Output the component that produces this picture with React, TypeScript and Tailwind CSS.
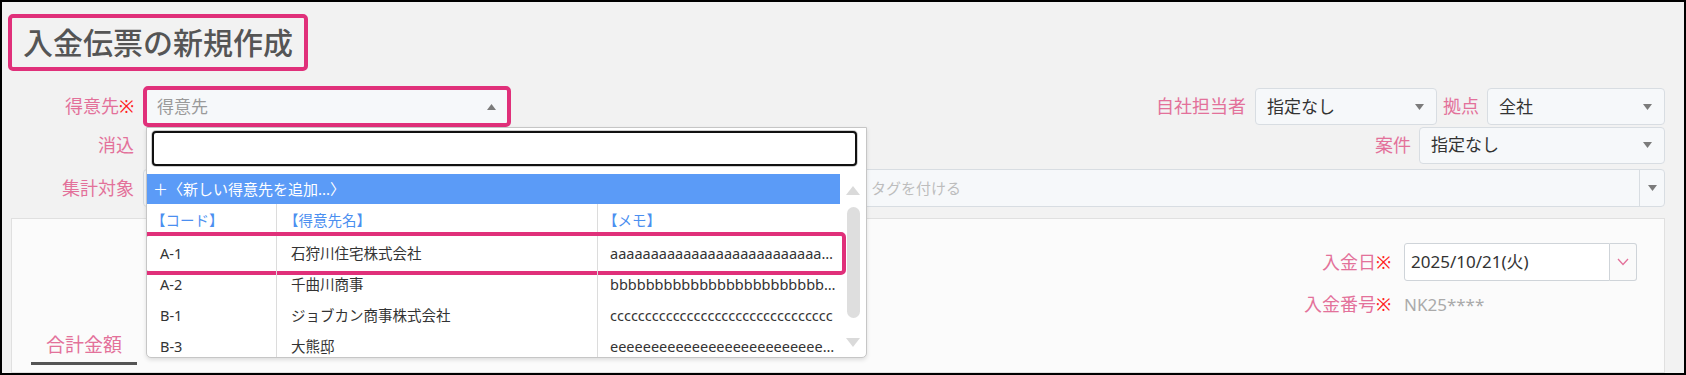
import React from "react";

function Caret({ up = false }: { up?: boolean }) {
  return (
    <svg width="9" height="6" viewBox="0 0 9 6" className="shrink-0">
      <polygon points={up ? "0,6 9,6 4.5,0" : "0,0 9,0 4.5,6"} fill="#7b7b7b" />
    </svg>
  );
}

function Label({ children, req = false, className = "" }: { children: React.ReactNode; req?: boolean; className?: string }) {
  return (
    <span className={"whitespace-nowrap text-[18px] text-[#e3719a] " + className}>
      {children}
      {req && <span className="text-[#ff2020]">※</span>}
    </span>
  );
}

function Select({ value, className = "" }: { value: string; className?: string }) {
  return (
    <div
      className={
        "flex h-[37px] items-center justify-between rounded-[4px] border border-[#d8dde2] bg-[#f6f8fa] pl-[11px] pr-[12px] text-[17px] text-[#333] " +
        className
      }
    >
      <span>{value}</span>
      <Caret />
    </div>
  );
}

const rows = [
  { code: "A-1", name: "石狩川住宅株式会社", memo: "aaaaaaaaaaaaaaaaaaaaaaaaaaaaaaaaaaaaaaaaa", sel: true },
  { code: "A-2", name: "千曲川商事", memo: "bbbbbbbbbbbbbbbbbbbbbbbbbbbbbbbbbbbbbbbbb", sel: false },
  { code: "B-1", name: "ジョブカン商事株式会社", memo: "cccccccccccccccccccccccccccccccc", sel: false },
  { code: "B-3", name: "大熊邸", memo: "eeeeeeeeeeeeeeeeeeeeeeeeeeeeeeeeeeeeeeeeeeee", sel: false },
];

function Dropdown() {
  return (
    <div className="absolute left-[3px] top-[41px] z-20 flex h-[231px] w-[721px] flex-col overflow-hidden rounded-b-[5px] border border-[#c6c6c6] bg-white shadow-[0_2px_4px_rgba(0,0,0,0.12)]">
      <div className="pl-[5px] pr-[9px] pt-[3px]">
        <div className="h-[35px] rounded-[4px] border-2 border-[#111] bg-white shadow-[0_0_0_1px_#cfcfcf]" />
      </div>
      <div className="mt-[8px] flex min-h-0 flex-1">
        <div className="flex w-[693px] flex-col">
          <div className="flex h-[30px] shrink-0 items-center bg-[#5b9bf7] pl-[6px] text-[15px] text-white">
            ＋〈新しい得意先を追加...〉
          </div>
          <div className="grid h-[34px] shrink-0 grid-cols-[130px_321px_242px] text-[14.5px] text-[#4b8ff0]">
            <div className="flex items-center border-r border-[#dcdcdc] pl-[4px]">【コード】</div>
            <div className="flex items-center border-r border-[#dcdcdc] pl-[7px]">【得意先名】</div>
            <div className="flex items-center pl-[5px]">【メモ】</div>
          </div>
          {rows.map((r) => (
            <div key={r.code} className="relative grid h-[31px] shrink-0 grid-cols-[130px_321px_242px] text-[14.5px] text-[#333]">
              <div className="flex items-center border-r border-[#dcdcdc] pl-[13px]">{r.code}</div>
              <div className="flex items-center border-r border-[#dcdcdc] pl-[14px]">{r.name}</div>
              <div className="min-w-0 self-center overflow-hidden text-ellipsis whitespace-nowrap pl-[12px] pr-[1px]">{r.memo}</div>
              {r.sel && (
                <div className="pointer-events-none absolute -bottom-[6px] -left-[4px] -right-[6px] -top-[6px] rounded-[5px] border-4 border-[#e0307a]" />
              )}
            </div>
          ))}
        </div>
        <div className="flex flex-1 flex-col items-center pt-[12px]">
          <svg width="14" height="9" viewBox="0 0 14 9">
            <polygon points="0,9 14,9 7,0" fill="#dadada" />
          </svg>
          <div className="mt-[12px] h-[111px] w-[13px] rounded-full bg-[#dedede]" />
          <svg width="14" height="9" viewBox="0 0 14 9" className="mt-[20px]">
            <polygon points="0,0 14,0 7,9" fill="#dadada" />
          </svg>
        </div>
      </div>
    </div>
  );
}

export default function App() {
  return (
    <div className="flex h-[375px] w-[1686px] flex-col overflow-hidden border-2 border-black bg-[#f2f2f2] font-['Noto_Sans','Noto_Sans_CJK_JP',sans-serif]">
      <div className="ml-[6px] mt-[12px] flex">
        <div className="flex h-[57px] items-center rounded-[5px] border-4 border-[#e0307a] px-[11px] text-[30px] font-medium text-[#555]">
          入金伝票の新規作成
        </div>
      </div>

      <div className="ml-[9px] mt-[15px] w-[1654px]">
        <div className="flex h-[41px] items-center">
          <div className="w-[123px] text-right">
            <Label req>得意先</Label>
          </div>
          <div className="relative z-20 ml-[9px] h-[41px] w-[368px]">
            <div className="flex h-full items-center justify-between rounded-[5px] border-4 border-[#e0307a] bg-[#f6f8fa] pl-[10px] pr-[11px] text-[17px] text-[#9a9a9a]">
              <span>得意先</span>
              <Caret up />
            </div>
            <Dropdown />
          </div>
          <div className="flex-1" />
          <Label>自社担当者</Label>
          <Select value="指定なし" className="ml-[9px] w-[182px]" />
          <Label className="ml-[6px]">拠点</Label>
          <Select value="全社" className="ml-[8px] w-[178px]" />
        </div>

        <div className="flex h-[36px] items-center">
          <div className="w-[123px] text-right">
            <Label>消込</Label>
          </div>
          <div className="flex-1" />
          <Label>案件</Label>
          <Select value="指定なし" className="ml-[8px] h-[36px] w-[246px]" />
        </div>

        <div className="mt-[6px] flex h-[38px] items-center">
          <div className="w-[123px] text-right">
            <Label>集計対象</Label>
          </div>
          <div className="ml-[9px] flex h-[38px] flex-1 items-center rounded-[4px] border border-[#d8dde2] bg-[#f6f8fa]">
            <div className="flex-1 pl-[727px] text-[15px] text-[#bdbdbd]">タグを付ける</div>
            <div className="flex h-full w-[25px] items-center justify-center border-l border-[#d8dde2]">
              <Caret />
            </div>
          </div>
        </div>
      </div>

      <div className="ml-[9px] mt-[11px] flex min-h-0 w-[1654px] flex-1 items-start justify-between border border-[#e0e0e0] bg-[#fbfbfb] pl-[19px] pr-[27px]">
        <div className="mt-[112px] flex h-[34px] w-[106px] items-start justify-center border-b-[3px] border-[#555]">
          <span className="text-[19px] text-[#e3719a]">合計金額</span>
        </div>
        <div className="grid grid-cols-[auto_233px] items-center gap-x-[13px] pt-[24px]">
          <div className="text-right">
            <Label req>入金日</Label>
          </div>
          <div className="flex h-[38px]">
            <div className="flex flex-1 items-center rounded-l-[3px] border border-[#cfd4d9] bg-white pl-[6px] text-[17px] text-[#333]">
              2025/10/21(火)
            </div>
            <div className="flex w-[27px] items-center justify-center rounded-r-[3px] border border-l-0 border-[#cfd4d9] bg-[#fafafa]">
              <svg width="12" height="8" viewBox="0 0 12 8">
                <polyline points="1,1 6,6.5 11,1" fill="none" stroke="#e3719a" strokeWidth="1.3" />
              </svg>
            </div>
          </div>
          <div className="mt-[10px] text-right">
            <Label req>入金番号</Label>
          </div>
          <div className="mt-[10px] text-[17px] text-[#aaa]">NK25****</div>
        </div>
      </div>
    </div>
  );
}
